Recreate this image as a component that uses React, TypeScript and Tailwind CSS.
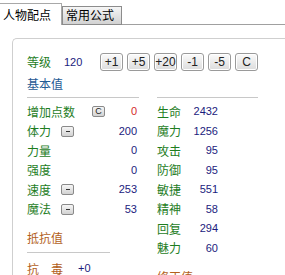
import React from "react";

const GREEN = "text-[#1e7d1e]";
const BLUE = "text-[#1b1b7d]";

function Btn({ t }: { t: string }) {
  return (
    <div className="w-[23px] h-[18px] rounded-[3px] border border-[#9a9a9a] bg-gradient-to-b from-[#fbfbfb] to-[#dcdcdc] shadow-[inset_0_0_0_1px_#ffffff] flex items-center justify-center text-[12px] leading-none text-[#222] font-['Liberation_Sans',sans-serif]">
      {t}
    </div>
  );
}

function Mini({ t }: { t: string }) {
  return (
    <div className="w-[13px] h-[11px] rounded-[2px] border border-[#8a8a8a] bg-gradient-to-b from-[#f6f6f6] to-[#d2d2d2] flex items-center justify-center text-[9px] leading-none text-[#222] font-['Liberation_Sans',sans-serif]">
      {t === "-" ? <span className="block w-[4px] h-[1px] bg-[#333]" /> : t}
    </div>
  );
}

function LRow({ label, btn, btnGap, value, red }: { label: string; btn?: string; btnGap?: string; value: string; red?: boolean }) {
  return (
    <div className="flex items-center h-[19.5px]">
      <span className={`${GREEN} leading-none`}>{label}</span>
      {btn ? <div className={btnGap}><Mini t={btn} /></div> : null}
      <span className={`flex-1 text-right pr-[2px] text-[11px] leading-none font-['Liberation_Sans',sans-serif] ${red ? "text-[#d42a2a]" : BLUE}`}>{value}</span>
    </div>
  );
}

function RRow({ label, value }: { label: string; value: string }) {
  return (
    <div className="flex items-center h-[19.5px]">
      <span className={`${GREEN} w-[36px] leading-none`}>{label}</span>
      <span className={`w-[25px] text-right text-[11px] leading-none font-['Liberation_Sans',sans-serif] ${BLUE}`}>{value}</span>
    </div>
  );
}

export default function App() {
  return (
    <div className="w-[285px] h-[275px] overflow-hidden bg-white text-[12px] text-black font-['Noto_Sans_CJK_SC','Noto_Sans_CJK_JP',sans-serif]">
      <div className="flex items-end h-[25px]">
        <div className="h-[22px] w-[62px] border-t border-r border-[#a8a8a8] pl-[3px] pt-[4px] leading-[14px]">人物配点</div>
        <div className="h-[19px] w-[60px] border border-[#8c8c8c] bg-gradient-to-b from-[#f6f6f6] to-[#d2d2d2] pl-[3px] pt-[1px] leading-[14px]">常用公式</div>
        <div className="flex-1 border-b border-[#a0a0a0]" />
      </div>
      <div className="mt-[13px] ml-[12px] border-t border-l border-[#cfcfcf] rounded-tl-[5px] pl-[14px] pt-[14px] h-[300px]">
        <div className="flex items-center h-[18px]">
          <span className={`${GREEN} w-[37px] leading-none`}>等级</span>
          <span className={`${BLUE} w-[36px] text-[11px] leading-none font-['Liberation_Sans',sans-serif]`}>120</span>
          <div className="flex gap-[4px]">
            <Btn t="+1" />
            <Btn t="+5" />
            <Btn t="+20" />
            <Btn t="-1" />
            <Btn t="-5" />
            <Btn t="C" />
          </div>
        </div>
        <div className="mt-[6px] grid grid-cols-[112px_101px] gap-x-[18px]">
          <div className="flex flex-col">
            <div className="h-[14px] leading-[14px] text-[#1f5a94]">基本值</div>
            <div className="mt-[6px] h-px bg-[#c8c8c8]" />
            <div className="mt-[4px] flex flex-col">
              <LRow label="增加点数" btn="C" btnGap="ml-[17px]" value="0" red />
              <LRow label="体力" btn="-" btnGap="ml-[10px]" value="200" />
              <LRow label="力量" value="0" />
              <LRow label="强度" value="0" />
              <LRow label="速度" btn="-" btnGap="ml-[10px]" value="253" />
              <LRow label="魔法" btn="-" btnGap="ml-[10px]" value="53" />
            </div>
            <div className="mt-[12px] h-[14px] leading-[14px] text-[#b35f1c]">抵抗值</div>
            <div className="mt-[7px] h-px w-[83px] bg-[#c8c8c8]" />
            <div className="mt-[6px] flex items-center h-[19.5px]">
              <span className="text-[#b35f1c] w-[51px] leading-none">抗　毒</span>
              <span className={`${BLUE} text-[11px] leading-none font-['Liberation_Sans',sans-serif]`}>+0</span>
            </div>
          </div>
          <div className="flex flex-col">
            <div className="h-[14px]" />
            <div className="mt-[6px] h-px bg-[#c8c8c8]" />
            <div className="mt-[4px] flex flex-col">
              <RRow label="生命" value="2432" />
              <RRow label="魔力" value="1256" />
              <RRow label="攻击" value="95" />
              <RRow label="防御" value="95" />
              <RRow label="敏捷" value="551" />
              <RRow label="精神" value="58" />
              <RRow label="回复" value="294" />
              <RRow label="魅力" value="60" />
            </div>
            <div className="mt-[12px] h-[14px] leading-[14px] text-[#b35f1c]">修正值</div>
          </div>
        </div>
      </div>
    </div>
  );
}
